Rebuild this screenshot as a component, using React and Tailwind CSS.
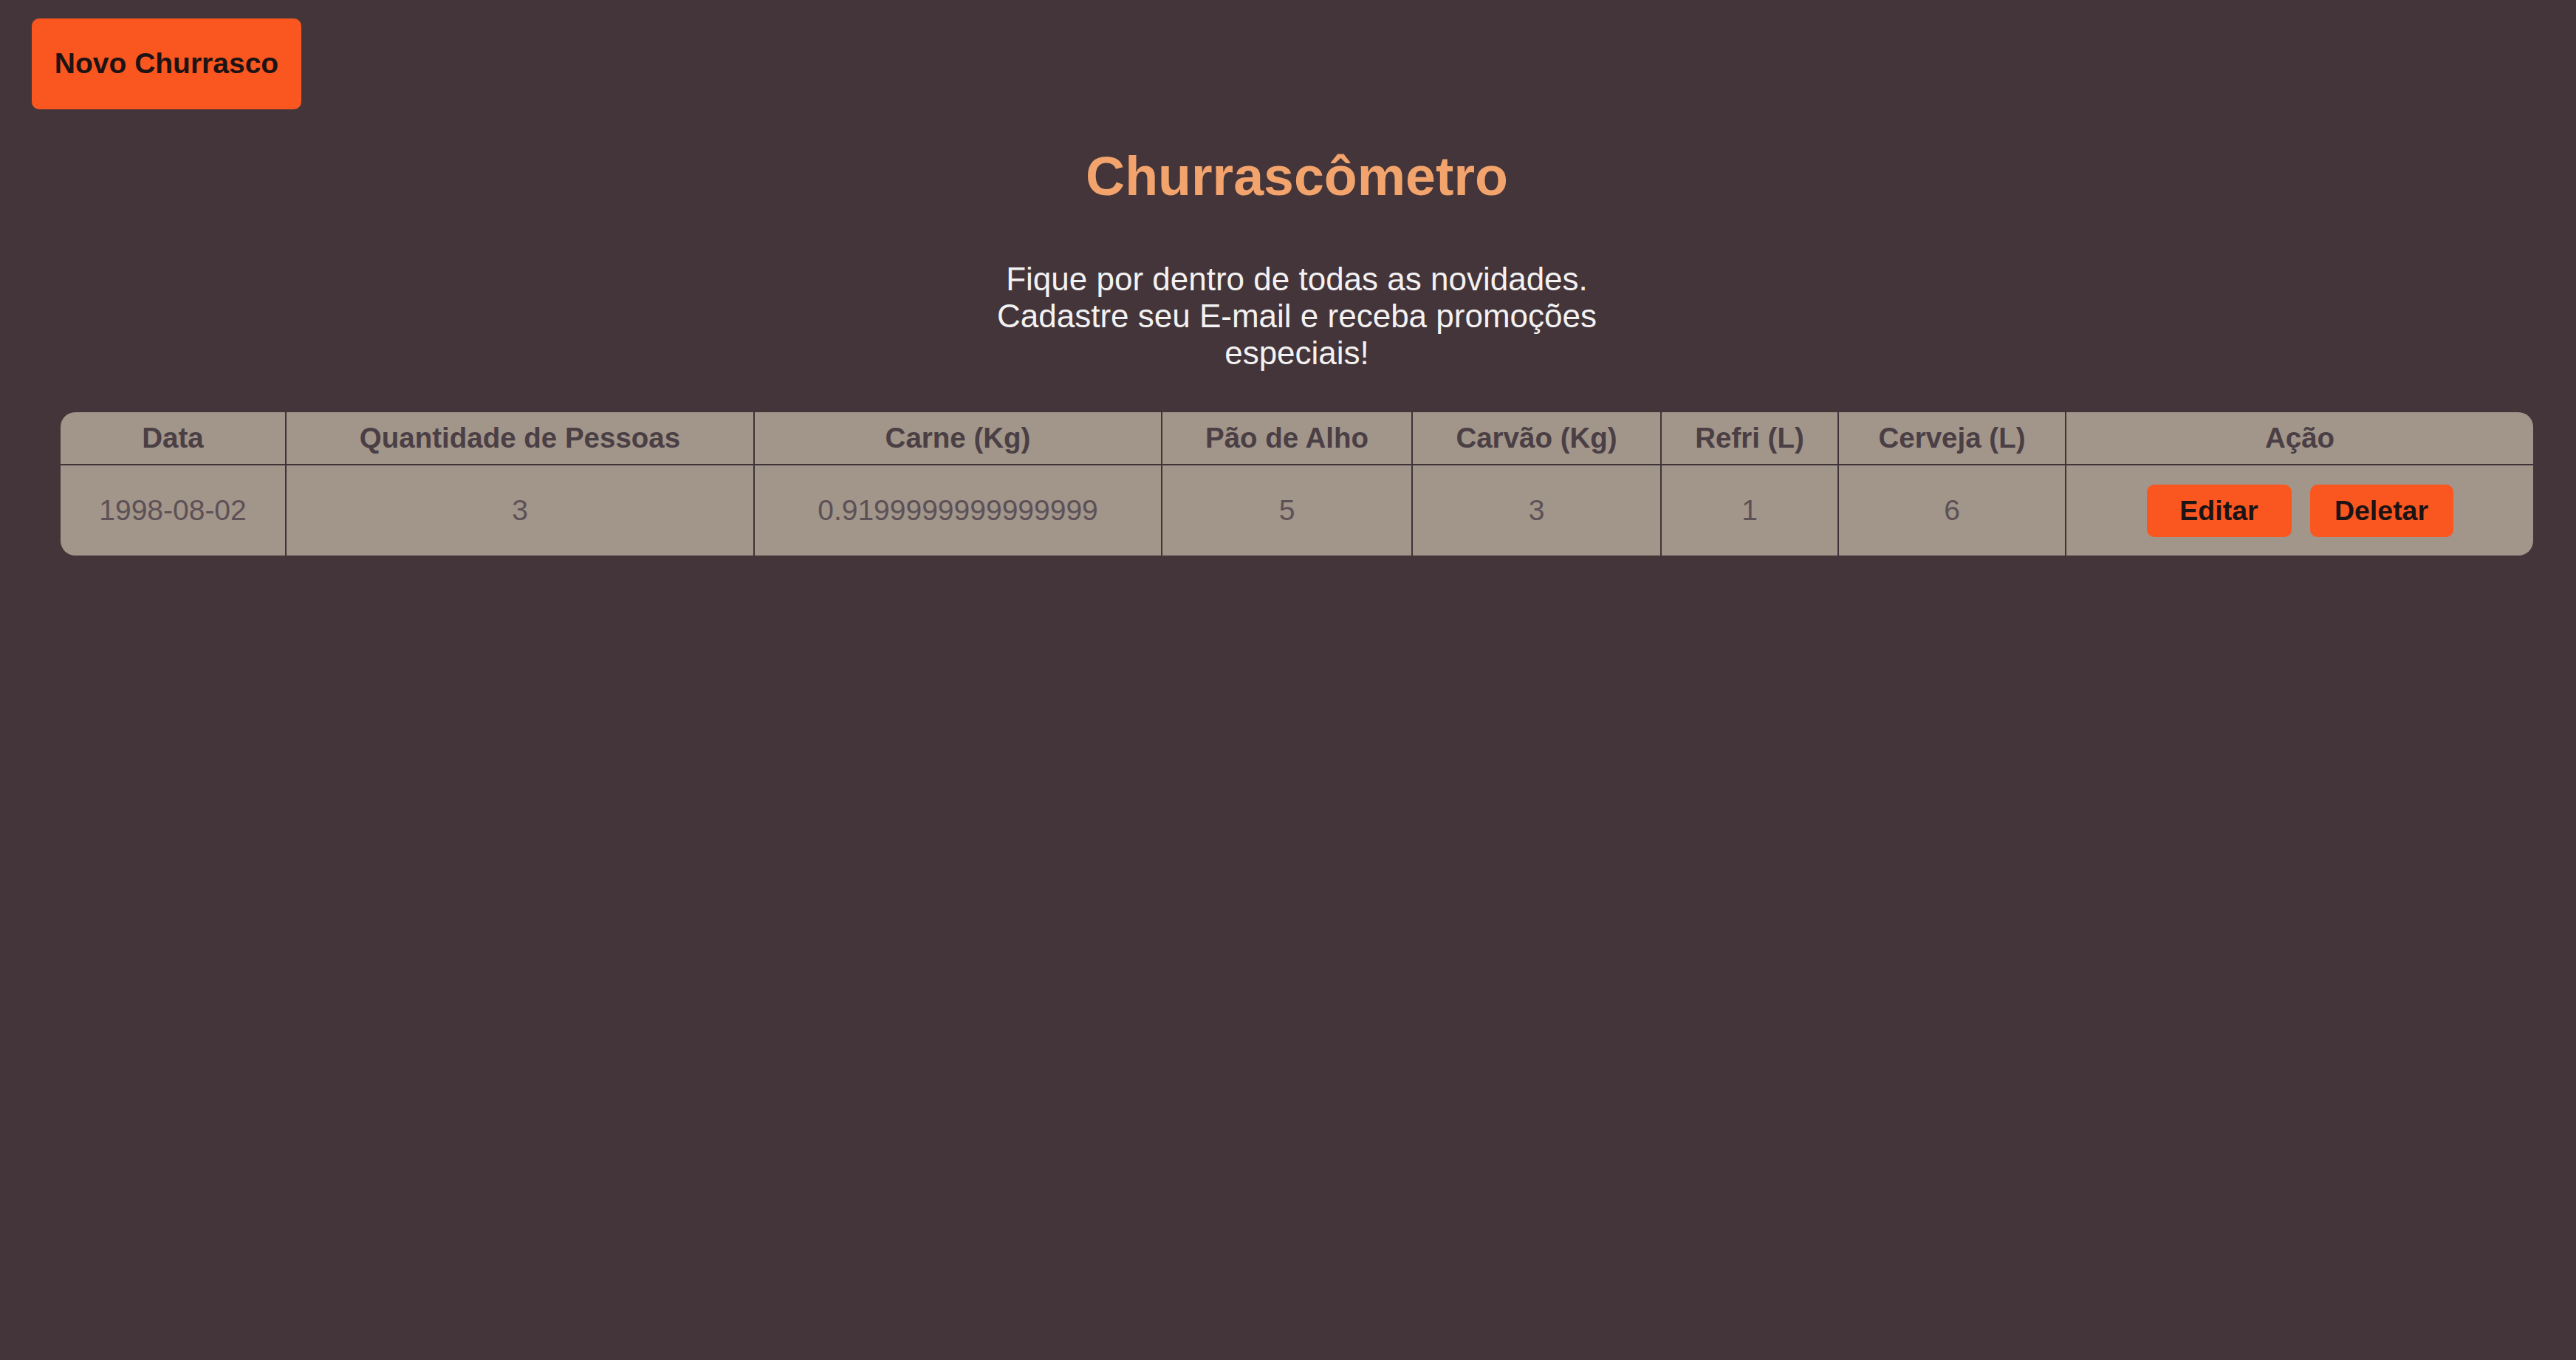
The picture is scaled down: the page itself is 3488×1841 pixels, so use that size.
export default function App() {
  const headers = [
    { label: "Data", w: "w-[306px]" },
    { label: "Quantidade de Pessoas", w: "w-[634px]" },
    { label: "Carne (Kg)", w: "w-[552px]" },
    { label: "Pão de Alho", w: "w-[339px]" },
    { label: "Carvão (Kg)", w: "w-[337px]" },
    { label: "Refri (L)", w: "w-[240px]" },
    { label: "Cerveja (L)", w: "w-[308px]" },
    { label: "Ação", w: "flex-1" },
  ];
  const row = ["1998-08-02", "3", "0.9199999999999999", "5", "3", "1", "6"];

  return (
    <div
      className="min-h-[1841px] w-full bg-[#433539] pt-[25px]"
      style={{ fontFamily: '"Liberation Sans", Arial, sans-serif' }}
    >
      <div className="pl-[43px]">
        <button className="h-[123px] w-[365px] rounded-[10px] bg-[#f95620] text-[39px] font-bold text-[#1c1414]">
          Novo Churrasco
        </button>
      </div>

      <div className="flex flex-col items-center pl-[24px]">
        <h1 className="mt-[49px] text-[73.5px] font-bold leading-[83px] text-[#f2a46c]">
          Churrascômetro
        </h1>
        <p className="mt-[73px] w-[840px] text-center text-[44px] leading-[50px] text-[#f3f1f2]">
          Fique por dentro de todas as novidades. Cadastre seu E-mail e receba promoções especiais!
        </p>
      </div>

      <div className="ml-[82px] mt-[55px] flex w-[3348px] flex-col overflow-hidden rounded-[20px] bg-[#a2958a]">
        <div className="flex h-[72px] border-b-[2px] border-[#3e3338]">
          {headers.map((h, i) => (
            <div
              key={h.label}
              className={`${h.w} flex items-center justify-center text-[38.5px] font-bold text-[#4a3f45] ${
                i < headers.length - 1 ? "border-r-[2px] border-[#3e3338]" : ""
              }`}
            >
              {h.label}
            </div>
          ))}
        </div>
        <div className="flex h-[122px]">
          {row.map((v, i) => (
            <div
              key={i}
              className={`${headers[i].w} flex items-center justify-center border-r-[2px] border-[#3e3338] text-[39px] text-[#5c5156]`}
            >
              {v}
            </div>
          ))}
          <div className="flex flex-1 items-center justify-center gap-[25px]">
            <button className="h-[71px] w-[196px] rounded-[10px] bg-[#f95620] text-[37.5px] font-bold text-[#1c1414]">
              Editar
            </button>
            <button className="h-[71px] w-[194px] rounded-[10px] bg-[#f95620] text-[37.5px] font-bold text-[#1c1414]">
              Deletar
            </button>
          </div>
        </div>
      </div>
    </div>
  );
}
